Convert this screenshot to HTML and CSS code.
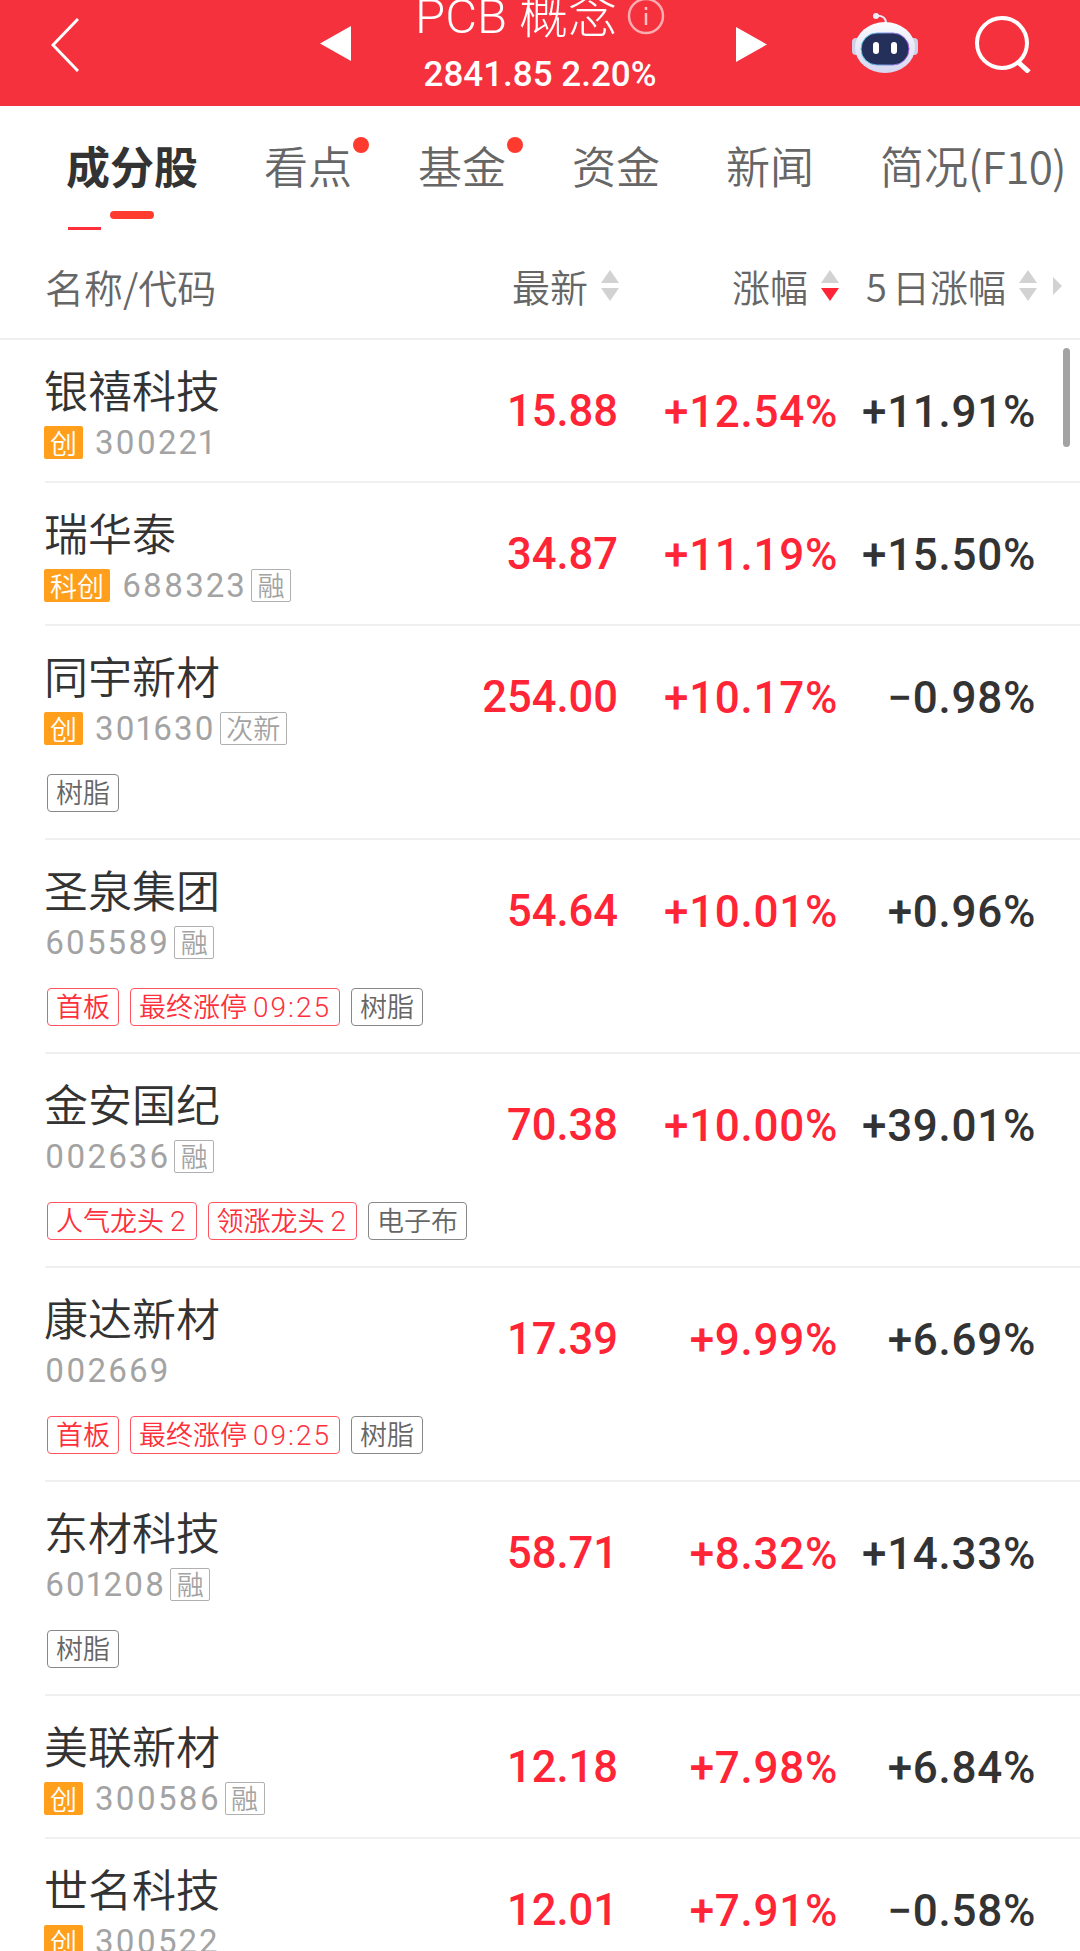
FILE: index.html
```html
<!DOCTYPE html>
<html lang="zh-CN">
<head>
    <meta charset="UTF-8">
    <meta name="viewport" content="width=device-width, initial-scale=1.0">
    <title>PCB概念</title>
    <link rel="stylesheet" href="styles.css">
</head>
<body>
    <div class="page">
        <header class="top">
            <svg class="back" width="28" height="54" viewBox="0 0 28 54"><path d="M27 1 L2 27 L27 53" fill="none" stroke="#fff" stroke-width="3"/></svg>
            <svg class="nav-prev" width="31" height="35" viewBox="0 0 31 35"><path d="M31 0 V35 L0 17.5 Z" fill="#fff"/></svg>
            <div class="title-box">
                <div class="title"><span>PCB 概念</span>
                    <svg class="info" width="38" height="38" viewBox="0 0 38 38"><circle cx="19" cy="19" r="17" fill="none" stroke="#fff" stroke-opacity=".6" stroke-width="2.5"/><path d="M19 16 V28 M19 10 V13" stroke="#fff" stroke-opacity=".7" stroke-width="2.5"/></svg>
                </div>
                <div class="subtitle">2841.85 2.20%</div>
            </div>
            <svg class="nav-next" width="31" height="35" viewBox="0 0 31 35"><path d="M0 0 V35 L31 17.5 Z" fill="#fff"/></svg>
            <svg class="robot" width="66" height="60" viewBox="0 0 66 60">
                <defs>
                    <linearGradient id="shell" x1="0" y1="0" x2="0" y2="1"><stop offset="0" stop-color="#fbfbff"/><stop offset="1" stop-color="#d6d6f0"/></linearGradient>
                    <linearGradient id="visor" x1="0" y1="0" x2="1" y2="0"><stop offset="0" stop-color="#4fd3e8"/><stop offset="1" stop-color="#a65be0"/></linearGradient>
                </defs>
                <path d="M24 3 C30 2 34 5 34 10" fill="none" stroke="#e8e8f6" stroke-width="2"/>
                <circle cx="24" cy="3" r="3" fill="#eeeefa"/>
                <rect x="0" y="25" width="8" height="17" rx="4" fill="#cfcfe8"/>
                <rect x="58" y="25" width="8" height="17" rx="4" fill="#cfcfe8"/>
                <ellipse cx="33" cy="34.5" rx="30" ry="25.5" fill="url(#shell)"/>
                <rect x="9" y="20" width="48" height="32" rx="16" fill="#25305a" stroke="url(#visor)" stroke-width="1"/>
                <rect x="21" y="29" width="6" height="12" rx="3" fill="#fff"/>
                <rect x="39" y="29" width="6" height="12" rx="3" fill="#fff"/>
            </svg>
            <svg class="search" width="58" height="60" viewBox="0 0 58 60"><circle cx="27" cy="30" r="25" fill="none" stroke="#fff" stroke-width="4"/><path d="M43 49 L54 59" stroke="#fff" stroke-width="5"/></svg>
        </header>

        <nav class="tabs">
            <span class="tab active">成分股</span>
            <span class="tab dot">看点</span>
            <span class="tab dot">基金</span>
            <span class="tab">资金</span>
            <span class="tab">新闻</span>
            <span class="tab">简况<span class="tab-latin">(F10)</span></span>
            <i class="mark-line"></i>
            <i class="mark-pill"></i>
        </nav>

        <div class="thead">
            <div class="th-name">名称/代码</div>
            <div class="th">最新<span class="sort"><i class="up"></i><i class="down"></i></span></div>
            <div class="th">涨幅<span class="sort"><i class="up"></i><i class="down on"></i></span></div>
            <div class="th"><span class="th-num">5</span>日涨幅<span class="sort"><i class="up"></i><i class="down"></i></span><i class="more"></i></div>
        </div>

        <div class="list">
            <i class="scrollbar"></i>

            <div class="row">
                <div class="main">
                    <div class="stock"><div class="name">银禧科技</div><div class="meta"><span class="board">创</span><span class="code">300221</span></div></div>
                    <div class="val price red">15.88</div><div class="val red">+12.54%</div><div class="val">+11.91%</div>
                </div>
            </div>

            <div class="row">
                <div class="main">
                    <div class="stock"><div class="name">瑞华泰</div><div class="meta"><span class="board">科创</span><span class="code">688323</span><span class="flag">融</span></div></div>
                    <div class="val price red">34.87</div><div class="val red">+11.19%</div><div class="val">+15.50%</div>
                </div>
            </div>

            <div class="row">
                <div class="main">
                    <div class="stock"><div class="name">同宇新材</div><div class="meta"><span class="board">创</span><span class="code">301630</span><span class="flag">次新</span></div></div>
                    <div class="val price red">254.00</div><div class="val red">+10.17%</div><div class="val">−0.98%</div>
                </div>
                <div class="tags"><span class="tag">树脂</span></div>
            </div>

            <div class="row">
                <div class="main">
                    <div class="stock"><div class="name">圣泉集团</div><div class="meta"><span class="code">605589</span><span class="flag">融</span></div></div>
                    <div class="val price red">54.64</div><div class="val red">+10.01%</div><div class="val">+0.96%</div>
                </div>
                <div class="tags"><span class="tag hot">首板</span><span class="tag hot">最终涨停<span class="num">09:25</span></span><span class="tag">树脂</span></div>
            </div>

            <div class="row">
                <div class="main">
                    <div class="stock"><div class="name">金安国纪</div><div class="meta"><span class="code">002636</span><span class="flag">融</span></div></div>
                    <div class="val price red">70.38</div><div class="val red">+10.00%</div><div class="val">+39.01%</div>
                </div>
                <div class="tags"><span class="tag hot">人气龙头<span class="num">2</span></span><span class="tag hot">领涨龙头<span class="num">2</span></span><span class="tag">电子布</span></div>
            </div>

            <div class="row">
                <div class="main">
                    <div class="stock"><div class="name">康达新材</div><div class="meta"><span class="code">002669</span></div></div>
                    <div class="val price red">17.39</div><div class="val red">+9.99%</div><div class="val">+6.69%</div>
                </div>
                <div class="tags"><span class="tag hot">首板</span><span class="tag hot">最终涨停<span class="num">09:25</span></span><span class="tag">树脂</span></div>
            </div>

            <div class="row">
                <div class="main">
                    <div class="stock"><div class="name">东材科技</div><div class="meta"><span class="code">601208</span><span class="flag">融</span></div></div>
                    <div class="val price red">58.71</div><div class="val red">+8.32%</div><div class="val">+14.33%</div>
                </div>
                <div class="tags"><span class="tag">树脂</span></div>
            </div>

            <div class="row">
                <div class="main">
                    <div class="stock"><div class="name">美联新材</div><div class="meta"><span class="board">创</span><span class="code">300586</span><span class="flag">融</span></div></div>
                    <div class="val price red">12.18</div><div class="val red">+7.98%</div><div class="val">+6.84%</div>
                </div>
            </div>

            <div class="row">
                <div class="main">
                    <div class="stock"><div class="name">世名科技</div><div class="meta"><span class="board">创</span><span class="code">300522</span></div></div>
                    <div class="val price red">12.01</div><div class="val red">+7.91%</div><div class="val">−0.58%</div>
                </div>
            </div>
        </div>
    </div>
</body>
</html>
```

FILE: styles.css
```css
* {
    box-sizing: border-box;
}

html, body {
    margin: 0;
    height: 1951px;
    overflow: hidden;
    background: #fff;
}

body {
    font-family: "Noto Sans CJK SC", "Noto Sans", sans-serif;
    color: #333;
}

.page {
    width: 1080px;
    height: 1951px;
    overflow: hidden;
}

i {
    display: block;
}

/* top red bar */
.top {
    height: 106px;
    background: #f4313c;
    display: flex;
    align-items: flex-start;
    overflow: hidden;
    color: #fff;
}

.back {
    margin: 18px 0 0 51px;
}

.nav-prev {
    margin: 26px 0 0 241px;
}

.title-box {
    width: 385px;
    padding-right: 7px;
    text-align: center;
}

.title {
    height: 60px;
    margin-top: -13px;
    display: flex;
    justify-content: center;
    align-items: flex-end;
    font-size: 49px;
    line-height: 60px;
    font-family: "Roboto", "Noto Sans CJK SC", sans-serif;
    font-weight: 300;
}

.info {
    margin-left: 10px;
    position: relative;
    top: -12px;
}

.subtitle {
    font-family: "Roboto", sans-serif;
    font-weight: 500;
    font-size: 35px;
    line-height: 40px;
    margin-top: 8px;
}

.nav-next {
    margin: 27px 0 0 0;
}

.robot {
    margin: 13px 0 0 85px;
}

.search {
    margin: 13px 0 0 57px;
}

/* tabs */
.tabs {
    position: relative;
    height: 127px;
    padding: 29px 0 0 66px;
    display: flex;
    gap: 66px;
    white-space: nowrap;
}

.tab {
    position: relative;
    font-size: 44px;
    line-height: 60px;
    color: #666;
    font-weight: 350;
}

.tab.active {
    color: #333;
    font-weight: 700;
}

.tab-latin {
    letter-spacing: -.7px;
}

.tab.dot::after {
    content: "";
    position: absolute;
    right: -17px;
    top: 2px;
    width: 16px;
    height: 16px;
    border-radius: 50%;
    background: #ff3b30;
}

.mark-line {
    position: absolute;
    left: 68px;
    top: 121px;
    width: 33px;
    height: 3px;
    background: #ff2f3c;
}

.mark-pill {
    position: absolute;
    left: 110px;
    top: 105px;
    width: 44px;
    height: 8px;
    border-radius: 4px;
    background: #ff3b30;
}

/* table head */
.thead {
    height: 107px;
    padding: 0 18px 0 45px;
    display: grid;
    grid-template-columns: 1fr 200px 220px 222px;
    align-items: center;
    border-bottom: 2px solid #f0f0f0;
    color: #666;
    font-size: 39px;
    font-weight: 350;
}

.th {
    display: flex;
    justify-content: flex-end;
    align-items: center;
    white-space: nowrap;
    font-size: 38px;
}

.th-num {
    margin-right: 5px;
}

.sort {
    width: 19px;
    margin-left: 13px;
    display: flex;
    flex-direction: column;
    gap: 5px;
}

.sort i {
    width: 0;
    height: 0;
    border-left: 9.5px solid transparent;
    border-right: 9.5px solid transparent;
}

.sort .up {
    border-bottom: 13px solid #d2d2d2;
}

.sort .down {
    border-top: 13px solid #d2d2d2;
}

.sort .down.on {
    border-top-color: #ff2436;
}

.more {
    width: 0;
    height: 0;
    margin-left: 15px;
    border-top: 9px solid transparent;
    border-bottom: 9px solid transparent;
    border-left: 9px solid #d2d2d2;
}

/* rows */
.list {
    position: relative;
}

.scrollbar {
    position: absolute;
    left: 1063px;
    top: 8px;
    width: 7px;
    height: 99px;
    border-radius: 4px;
    background: #a3a3a3;
}

.row {
    margin-left: 45px;
    border-bottom: 2px solid #f0f0f0;
}

.main {
    height: 141px;
    padding-right: 44px;
    display: grid;
    grid-template-columns: 1fr 200px 220px 198px;
    align-items: center;
}

.stock {
    align-self: start;
    padding-top: 19px;
}

.name {
    margin-left: -1px;
    font-size: 44px;
    line-height: 60px;
    color: #333;
    font-weight: 350;
}

.meta {
    height: 33px;
    margin-top: 7px;
    display: flex;
    align-items: center;
    white-space: nowrap;
}

.board {
    height: 33px;
    padding: 0 6px;
    margin-left: -1px;
    margin-right: 12px;
    border-radius: 2px;
    background: #ff9f1c;
    color: #fff;
    font-size: 27px;
    line-height: 33px;
    font-weight: 350;
}

.code {
    font-family: "Roboto", sans-serif;
    font-size: 33px;
    font-variant-numeric: proportional-nums;
    letter-spacing: 2px;
    color: #a3a3a3;
}

.flag {
    height: 33px;
    margin-left: 4px;
    padding: 0 5.5px;
    border: 1px solid #b0b0b0;
    border-radius: 2px;
    color: #a3a3a3;
    font-size: 27px;
    line-height: 30px;
    font-weight: 350;
}

.val {
    padding-top: 2px;
    font-family: "Roboto", sans-serif;
    font-weight: 500;
    font-size: 44px;
    letter-spacing: .7px;
    text-align: right;
    white-space: nowrap;
    color: #333;
}

.val.price {
    font-size: 43.5px;
    letter-spacing: 0;
}

.val.red {
    color: #ff2436;
}

.tags {
    height: 71px;
    padding: 7px 0 0 2px;
    display: flex;
    gap: 11px;
    align-items: flex-start;
}

.tag {
    height: 38px;
    padding: 0 8px;
    border: 1.5px solid #888;
    border-radius: 4px;
    color: #666;
    font-size: 27px;
    line-height: 34px;
    font-weight: 350;
    white-space: nowrap;
}

.tag .num {
    margin-left: 6px;
    font-family: "Roboto", sans-serif;
    font-size: 28px;
    letter-spacing: 2px;
}

.tag.hot {
    border-color: #ff5562;
    color: #ff2f3c;
}
```
